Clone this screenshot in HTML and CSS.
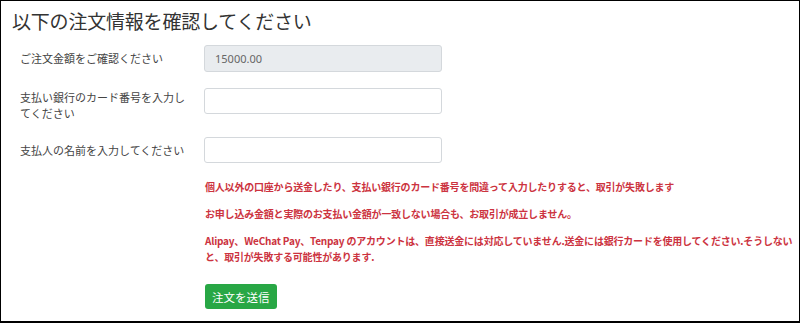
FILE: index.html
```html
<!DOCTYPE html>
<html>
<head>
  <meta charset="utf-8">
  <title>注文情報の確認</title>
  <link rel="stylesheet" href="styles.css">
</head>
<body>
  <div class="frame">
    <div class="page-title">以下の注文情報を確認してください</div>
    <form class="order-form">
      <div class="form-row">
        <label class="form-label">ご注文金額をご確認ください</label>
        <input class="form-input readonly" type="text" value="15000.00" readonly>
      </div>
      <div class="form-row">
        <label class="form-label two-line">支払い銀行のカード番号を入力してください</label>
        <input class="form-input" type="text">
      </div>
      <div class="form-row">
        <label class="form-label">支払人の名前を入力してください</label>
        <input class="form-input" type="text">
      </div>
      <div class="notes">
        <p>個人以外の口座から送金したり、支払い銀行のカード番号を間違って入力したりすると、取引が失敗します</p>
        <p>お申し込み金額と実際のお支払い金額が一致しない場合も、お取引が成立しません。</p>
        <p>Alipay、WeChat Pay、Tenpay のアカウントは、直接送金には対応していません.送金には銀行カードを使用してください.そうしないと、取引が失敗する可能性があります.</p>
      </div>
      <button class="form-submit" type="button">注文を送信</button>
    </form>
  </div>
</body>
</html>
```

FILE: styles.css
```css
html, body {
  margin: 0;
  padding: 0;
  background-color: #ffffff;
}

body {
  font-family: "Noto Sans CJK JP", "Noto Sans", sans-serif;
  color: #333333;
}

.frame {
  box-sizing: border-box;
  width: 800px;
  height: 323px;
  border: 1px solid #000000;
  border-bottom-width: 2px;
  overflow: hidden;
}

.page-title {
  font-size: 19px;
  line-height: 24px;
  padding: 8px 0 0 11px;
  letter-spacing: -0.2px;
  color: #333333;
}

.order-form {
  padding: 12px 0 0 19px;
}

.form-row {
  display: grid;
  grid-template-columns: 184px 238px;
  align-items: start;
  margin-bottom: 16px;
}

.form-label {
  font-size: 11px;
  line-height: 27px;
  color: #444444;
}

.form-label.two-line {
  line-height: 16px;
  padding-top: 1px;
  width: 168px;
}

.form-input {
  box-sizing: border-box;
  width: 238px;
  height: 26px;
  border: 1px solid #d4d8dc;
  border-radius: 3px;
  padding: 0 10px;
  font-family: "Noto Sans", sans-serif;
  font-size: 11px;
  color: #666666;
  background-color: #ffffff;
}

.form-input.readonly {
  height: 27px;
  background-color: #e9ecef;
}

.notes {
  margin-left: 185px;
  margin-top: -1px;
  padding-right: 0;
  color: #cc3340;
  font-size: 10px;
  font-weight: bold;
  line-height: 16px;
  letter-spacing: -0.2px;
}

.notes p {
  margin: 0 0 11px 0;
}

.form-submit {
  margin: 8px 0 0 185px;
  height: 25px;
  padding: 0 7px;
  border: none;
  border-radius: 3px;
  background-color: #28a745;
  color: #ffffff;
  font-family: "Noto Sans CJK JP", sans-serif;
  font-size: 11.5px;
  cursor: pointer;
}
```
